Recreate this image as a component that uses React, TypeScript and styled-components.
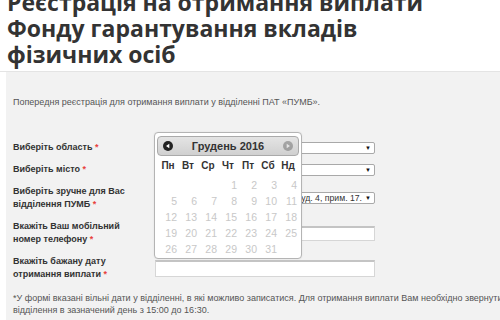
import styled, { createGlobalStyle } from "styled-components";

const GlobalStyle = createGlobalStyle`
  html, body {
    margin: 0;
    padding: 0;
    background: #fff;
  }
  body {
    width: 500px;
    height: 320px;
    overflow: hidden;
    font-family: "Liberation Sans", Arial, sans-serif;
  }
`;

const Header = styled.header`
  height: 71px;
  overflow: hidden;
  border-bottom: 1px solid #e4e4e4;
`;

const Title = styled.h1`
  margin: -11px 0 0;
  padding-left: 7px;
  font-family: "Open Sans", sans-serif;
  font-weight: 700;
  font-size: 23px;
  line-height: 26px;
  color: #333;
`;

const Panel = styled.main`
  margin-left: 6px;
  height: 248px;
  padding: 24px 0 0 7px;
  box-sizing: border-box;
  background: #f2f2f2;
  overflow: hidden;
`;

const Intro = styled.p`
  margin: 0;
  font-size: 9px;
  line-height: 13px;
  color: #555;
`;

const Form = styled.div`
  margin-top: 32px;
  display: grid;
  grid-template-columns: 142px 220px;
  row-gap: 9px;
  align-items: center;
`;

const Label = styled.label`
  font-weight: 700;
  font-size: 9px;
  line-height: 13px;
  color: #333;
`;

const Req = styled.span`
  color: #e8413c;
`;

const Select = styled.div`
  height: 12px;
  box-sizing: border-box;
  display: flex;
  align-items: center;
  justify-content: flex-end;
  gap: 3px;
  padding: 0 3px;
  overflow: hidden;
  white-space: nowrap;
  background: #fff;
  border: 1px solid #a9a9a9;
  border-radius: 2px;
  font-size: 8.7px;
  color: #333;
`;

const Arrow = styled.span`
  flex: none;
  font-size: 6px;
  color: #111;
`;

const Field = styled.div<{ $h: number }>`
  position: relative;
  height: ${(p) => p.$h}px;
  box-sizing: border-box;
  background: #fff;
  border: 1px solid #d6d6d6;
  border-top: 2px solid #c4c4c4;
`;

const Popup = styled.div`
  position: absolute;
  left: -2px;
  bottom: calc(100% + 3px);
  width: 148px;
  box-sizing: border-box;
  padding: 3px 2px 1px;
  background: #fff;
  border: 1px solid #b4b4b4;
  border-radius: 4px;
  box-shadow: 0 0 2px rgba(0, 0, 0, 0.08);
`;

const CalHead = styled.div`
  height: 20px;
  box-sizing: border-box;
  display: flex;
  align-items: center;
  justify-content: space-between;
  padding: 0 5px;
  border: 1px solid #aaa;
  border-radius: 4px;
  background: linear-gradient(#e4e4e4, #d0d0d0);
`;

const Month = styled.span`
  font-weight: 700;
  font-size: 11px;
  color: #333;
`;

const Nav = styled.svg<{ $off?: boolean }>`
  width: 10px;
  height: 10px;
  opacity: ${(p) => (p.$off ? 0.3 : 1)};
`;

const Grid = styled.div`
  display: grid;
  grid-template-columns: repeat(7, 20px);
  grid-template-rows: 21px repeat(5, 16px);
  margin: 0 1px;
`;

const DayName = styled.div`
  padding-top: 3px;
  text-align: center;
  font-weight: 700;
  font-size: 10px;
  line-height: 13px;
  color: #333;
`;

const Day = styled.div`
  text-align: right;
  padding-right: 1px;
  font-size: 10.5px;
  line-height: 16px;
  color: #c8c8c8;
`;

const Note = styled.p`
  margin: 11px 0 0;
  font-size: 9px;
  line-height: 12px;
  color: #555;
  white-space: nowrap;
`;

const names = ["Пн", "Вт", "Ср", "Чт", "Пт", "Сб", "Нд"];
const days: (number | null)[] = [null, null, null];
for (let d = 1; d <= 31; d++) days.push(d);

function NavIcon({ dir, off }: { dir: "l" | "r"; off?: boolean }) {
  return (
    <Nav viewBox="0 0 10 10" $off={off}>
      <circle cx="5" cy="5" r="5" fill="#222" />
      {dir === "l" ? (
        <path d="M3 5 L6.3 2.8 L6.3 7.2 Z" fill="#fff" />
      ) : (
        <path d="M7 5 L3.7 2.8 L3.7 7.2 Z" fill="#fff" />
      )}
    </Nav>
  );
}

export default function App() {
  return (
    <>
      <GlobalStyle />
      <Header>
        <Title>
          Реєстрація на отримання виплати
          <br />
          Фонду гарантування вкладів
          <br />
          фізичних осіб
        </Title>
      </Header>
      <Panel>
        <Intro>
          Попередня реєстрація для отримання виплати у відділенні ПАТ «ПУМБ».
        </Intro>
        <Form>
          <Label>
            Виберіть область <Req>*</Req>
          </Label>
          <Select>
            <Arrow>▼</Arrow>
          </Select>
          <Label>
            Виберіть місто <Req>*</Req>
          </Label>
          <Select>
            <Arrow>▼</Arrow>
          </Select>
          <Label>
            Виберіть зручне для Вас
            <br />
            відділення ПУМБ <Req>*</Req>
          </Label>
          <Select>
            <span>буд. 4, прим. 17.</span>
            <Arrow>▼</Arrow>
          </Select>
          <Label>
            Вкажіть Ваш мобільний
            <br />
            номер телефону <Req>*</Req>
          </Label>
          <Field $h={15} />
          <Label>
            Вкажіть бажану дату
            <br />
            отримання виплати <Req>*</Req>
          </Label>
          <Field $h={17}>
            <Popup>
              <CalHead>
                <NavIcon dir="l" />
                <Month>Грудень 2016</Month>
                <NavIcon dir="r" off />
              </CalHead>
              <Grid>
                {names.map((n) => (
                  <DayName key={n}>{n}</DayName>
                ))}
                {days.map((d, i) => (
                  <Day key={i}>{d ?? ""}</Day>
                ))}
              </Grid>
            </Popup>
          </Field>
        </Form>
        <Note>
          *У формі вказані вільні дати у відділенні, в які можливо записатися. Для
          отримання виплати Вам необхідно звернутися до
          <br />
          відділення в зазначений день з 15:00 до 16:30.
        </Note>
      </Panel>
    </>
  );
}
